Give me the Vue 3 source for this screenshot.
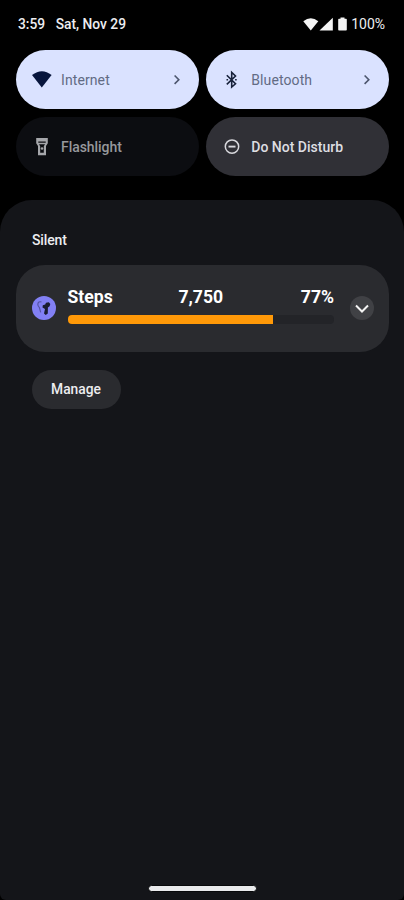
<script setup>
const tiles = [
  { id: 'internet', label: 'Internet', active: true, chevron: true },
  { id: 'bluetooth', label: 'Bluetooth', active: true, chevron: true },
  { id: 'flashlight', label: 'Flashlight', unavailable: true },
  { id: 'dnd', label: 'Do Not Disturb' },
]
const steps = { label: 'Steps', value: '7,750', percent: 77 }
</script>

<template>
  <main class="shade">
    <header class="status">
      <span class="time">3:59</span>
      <span class="date">Sat, Nov 29</span>
      <svg class="signals" width="45" height="14" viewBox="0 0 45 14" fill="#f4f4f4">
        <path d="M.3 4.200Q7.800-1.800 15.300 4.200L7.800 13.600Z" />
        <path d="M29.800 .8V13.600H16.500Z" />
        <path d="M37.500 .5h4v1.300h1.500q.8 0 .8.8v10.200q0 .8-.8.8h-7q-.8 0-.8-.8V2.600q0-.8.8-.8h1.500Z" />
      </svg>
      <span class="battery">100%</span>
    </header>

    <section class="tiles">
      <div
        v-for="tile in tiles"
        :key="tile.id"
        class="tile"
        :class="{ active: tile.active, unavailable: tile.unavailable }"
      >
        <svg class="tile-icon" width="20" height="20" viewBox="0 0 20 20" fill="none">
          <path v-if="tile.id === 'internet'" d="M0 5.100Q10-2.700 19.600 5.100L9.800 17.400Z" fill="#07153c" />
          <g v-else-if="tile.id === 'bluetooth'" stroke="#18223b" stroke-width="1.600">
            <path d="M4.800 5.300 13.500 13.800 9.700 17V2.400L13.500 6 4.800 14.300" />
            <path d="M4.500 9.800h1.600M13.100 9.800h1.600" stroke-width="1.400" />
          </g>
          <g v-else-if="tile.id === 'flashlight'">
            <path
              d="M4.200 1h11.600v5.200L14 9v9.200H6V9L4.200 6.200ZM6.300 4.500v1.200h7.400V4.500ZM7 7.200 8.200 9.200v6.600h3.600V9.200L13 7.200Z"
              fill="#a5a6aa"
              fill-rule="evenodd"
            />
            <circle cx="10" cy="11.500" r="1.300" fill="#a5a6aa" />
          </g>
          <g v-else stroke="#d8d8dd" stroke-width="1.500">
            <circle cx="10" cy="9.600" r="6.700" />
            <path d="M6.500 9.600h7" stroke-width="1.900" />
          </g>
        </svg>
        <span class="tile-label">{{ tile.label }}</span>
        <svg v-if="tile.chevron" class="chevron" width="8" height="12" viewBox="0 0 8 12" fill="none">
          <path d="M1.600 1.500 5.800 5.700 1.600 9.900" stroke="#4c556d" stroke-width="1.600" />
        </svg>
      </div>
    </section>

    <section class="panel">
      <h2 class="heading">Silent</h2>

      <article class="card">
        <svg class="app-icon" width="24" height="24" viewBox="0 0 24 24">
          <circle cx="12" cy="12" r="12" fill="#8280f4" />
          <path d="M9.500 6Q6.200 5 5.800 8.200 5.900 10.300 7.400 11.500L8.700 16.300" fill="none" stroke="#5553a5" stroke-width="1.200" />
          <path d="M10.500 11.500 10.800 9.200 13.200 8.500 14 6.700 16.800 6.300 18.300 8 17.600 10.300 15.900 11.500 15.800 17.500 13.700 19 12 17.500 13 13Z" fill="#1a1c31" />
        </svg>
        <div class="progress">
          <div class="figures">
            <span class="name">{{ steps.label }}</span>
            <span class="value">{{ steps.value }}</span>
            <span class="percent">{{ steps.percent }}%</span>
          </div>
          <div class="track">
            <div class="fill" :style="{ width: steps.percent + '%' }"></div>
          </div>
        </div>
        <button class="expand" aria-label="Expand">
          <svg width="24" height="24" viewBox="0 0 24 24" fill="none">
            <path d="M6 9.500 12 15.500 18 9.500" stroke="#f4f4f4" stroke-width="2" />
          </svg>
        </button>
      </article>

      <button class="manage">Manage</button>
      <div class="home-bar"></div>
    </section>
  </main>
</template>

<style>
body {
  background: #000;
}
</style>

<style scoped>
.shade {
  display: flex;
  flex-direction: column;
  box-sizing: border-box;
  width: 404px;
  height: 900px;
  background: #000;
  color: #ededf0;
  font-family: Roboto, 'Liberation Sans', sans-serif;
  font-weight: 500;
  overflow: hidden;
}

.status {
  display: flex;
  align-items: center;
  box-sizing: border-box;
  height: 50px;
  padding: 0 19px 3px 18px;
  font-size: 13.800px;
  line-height: 16px;
  white-space: nowrap;
}

.date {
  margin-left: 10.500px;
}

.signals {
  flex: none;
  margin-left: auto;
}

.battery {
  margin-left: 3px;
  font-size: 14px;
  font-weight: 400;
}

.tiles {
  display: grid;
  grid-template-columns: 182.900px 182.900px;
  grid-auto-rows: 59.300px;
  gap: 7.900px 7.400px;
  height: 150px;
  padding-left: 16px;
}

.tile {
  display: flex;
  align-items: center;
  box-sizing: border-box;
  padding: 0 18px 0 16px;
  border-radius: 30px;
  background: #303036;
  color: #dedee2;
}

.tile.active {
  background: #dae2ff;
  color: #626b84;
}

.tile.unavailable {
  background: #0c0d11;
  color: #97989c;
}

.tile-icon {
  flex: none;
}

.tile-label {
  margin-left: 9px;
  font-size: 14px;
  line-height: 20px;
  white-space: nowrap;
}

.tile.active .tile-label {
  font-weight: 400;
  letter-spacing: 0.1px;
}

.tile.unavailable .tile-label {
  letter-spacing: -0.05px;
}

.chevron {
  flex: none;
  margin-left: auto;
}

.panel {
  display: flex;
  flex: 1;
  flex-direction: column;
  align-items: flex-start;
  box-sizing: border-box;
  padding: 31px 15px 8px 16px;
  border-radius: 32px 32px 6px 6px;
  background: #141519;
}

.heading {
  margin: 0 0 0 16px;
  font-size: 14px;
  font-weight: 500;
  line-height: 18px;
  letter-spacing: -0.15px;
}

.card {
  display: flex;
  align-items: flex-start;
  box-sizing: border-box;
  width: 373px;
  height: 86.500px;
  margin-top: 16px;
  padding: 0 15px 0 16px;
  border-radius: 29px;
  background: #2a2b2f;
}

.app-icon {
  flex: none;
  margin-top: 31px;
}

.progress {
  flex: none;
  width: 266.500px;
  margin: 21px 0 0 11.500px;
}

.figures {
  display: grid;
  grid-template-columns: 1fr auto 1fr;
  color: #fff;
  font-size: 17.600px;
  font-weight: 700;
  line-height: 22px;
}

.percent {
  text-align: right;
}

.track {
  height: 8.500px;
  margin-top: 7px;
  border-radius: 4px;
  background: #232428;
  overflow: hidden;
}

.fill {
  height: 100%;
  background: #ff9908;
}

.expand {
  width: 24px;
  height: 24px;
  margin: 31px 0 0 auto;
  padding: 0;
  border: 0;
  border-radius: 50%;
  background: #404145;
}

.expand svg {
  display: block;
}

.manage {
  width: 89px;
  height: 39.500px;
  margin: 18px 0 0 16px;
  padding: 0 1px 0 0;
  border: 0;
  border-radius: 20px;
  background: #2a2b2f;
  color: #ededf0;
  font: 500 13.800px/20px Roboto, 'Liberation Sans', sans-serif;
}

.home-bar {
  width: 107px;
  height: 5px;
  margin: auto auto 0 132px;
  border: 1px solid #08090b;
  box-sizing: content-box;
  border-radius: 4px;
  background: #e9eaec;
}
</style>
